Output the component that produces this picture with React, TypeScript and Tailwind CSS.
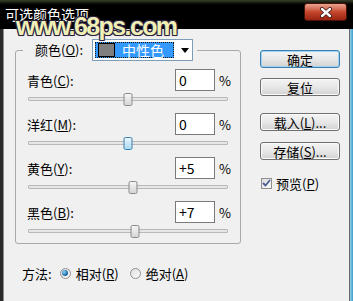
import React from "react";

const ROWS = [
  { label: "青色", key: "C", value: 0 },
  { label: "洋红", key: "M", value: 0, active: true },
  { label: "黄色", key: "Y", value: 5 },
  { label: "黑色", key: "B", value: 7 },
];

function Button({ children, primary }: { children: React.ReactNode; primary?: boolean }) {
  return (
    <div
      className={
        "flex h-[18px] w-[80px] items-center justify-center rounded-[3px] border bg-gradient-to-b from-[#f4f4f4] via-[#e8e8e8] to-[#d2d2d2] text-[13px] leading-none text-black " +
        (primary
          ? "border-[#3c7fb1] shadow-[inset_0_0_0_1px_#9fd3f2]"
          : "border-[#707070] shadow-[inset_0_0_0_1px_#fbfbfb]")
      }
    >
      {children}
    </div>
  );
}

function Slider({ value, active }: { value: number; active?: boolean }) {
  return (
    <div className="relative ml-[1px] flex h-[16px] w-[200px] items-center">
      <div className="h-[4px] w-full rounded-[1px] border border-[#b8b8b8] bg-[#e6e6e6]" />
      <div
        className={
          "absolute top-[2px] h-[13px] w-[9px] -translate-x-1/2 rounded-[2px] border " +
          (active
            ? "border-[#3c7fb1] bg-gradient-to-b from-[#eaf6fd] to-[#a7d9f5]"
            : "border-[#8a8a8a] bg-gradient-to-b from-[#f5f5f5] to-[#d6d6d6]")
        }
        style={{ left: 100 + value }}
      />
    </div>
  );
}

function Radio({ checked }: { checked?: boolean }) {
  return (
    <span className="flex h-[11px] w-[11px] items-center justify-center rounded-full border border-[#8e8f8f] bg-gradient-to-br from-[#e0e0e0] to-[#fafafa]">
      {checked && (
        <span className="h-[6px] w-[6px] rounded-full bg-[radial-gradient(circle_at_35%_35%,#8fd3ff,#1b6aa5_60%,#0d3f6b)]" />
      )}
    </span>
  );
}

export default function App() {
  return (
    <div className="flex h-[301px] w-[353px] flex-col overflow-hidden bg-black font-['Noto_Sans_CJK_SC','Liberation_Sans',sans-serif] text-[13px] text-black">
      {/* title bar */}
      <div className="relative z-10 h-[29px] shrink-0 bg-gradient-to-b from-[#39402c] via-black via-[22%] to-black">
        <div className="pl-[5px] pt-[6px] text-[14px] leading-[17px] text-white">可选颜色选项</div>
        <div className="absolute left-[16px] top-[14px] font-['Liberation_Sans',Arial,sans-serif] text-[25px] font-bold leading-[24px] tracking-[-1.6px] text-[#efefb6] [text-shadow:0_0_2px_#2b2342,1px_1px_0_#2b2342,-1px_-1px_0_#2b2342,1px_-1px_0_#2b2342,-1px_1px_0_#2b2342]">
          www.68ps.com
        </div>
        <div className="absolute right-[6px] top-[3px] flex h-[18px] w-[43px] items-center justify-center rounded-[3px] border border-[#4a1208] bg-gradient-to-b from-[#e9a592] via-[#c5452c] to-[#9b2410]">
          <svg width="14" height="11" viewBox="0 0 14 11">
            <path d="M3 2 L11 9 M11 2 L3 9" stroke="#3a1a14" strokeWidth="4" strokeLinecap="round" />
            <path d="M3 2 L11 9 M11 2 L3 9" stroke="#ffffff" strokeWidth="2.4" strokeLinecap="round" />
          </svg>
        </div>
      </div>

      {/* body */}
      <div className="flex flex-1">
        <div className="w-[3px] shrink-0 bg-[#2a2a2a]" />
        <div className="flex flex-1 border-l border-[#8c8c8c] bg-[#f0f0f0]">
          {/* left column */}
          <div className="ml-[11px] mt-[10px] flex w-[226px] flex-col">
            <fieldset className="rounded-[3px] border border-[#a9a9a9] pb-[4px]">
              <legend className="ml-[7px] flex items-center pl-[12px] pr-[4px]">
                <span className="w-[57px] leading-[16px]">
                  颜色(<u>O</u>):
                </span>
                <div className="flex h-[22px] w-[101px] items-center border border-[#7f9db9] bg-white pl-[2px]">
                  <div className="flex h-[16px] w-[79px] items-center border border-dotted border-[#1a1a1a] bg-[#3399ff] pl-[2px]">
                    <span className="h-[14px] w-[17px] border border-black bg-[#7f7f7f]" />
                    <span className="ml-[7px] text-[14px] leading-none text-white">中性色</span>
                  </div>
                  <svg className="ml-[7px]" width="8" height="5" viewBox="0 0 8 5">
                    <path d="M0 0 H8 L4 5 Z" fill="#000" />
                  </svg>
                </div>
              </legend>
              <div className="flex flex-col pl-[11px] pr-[9px] pt-[8px]">
                {ROWS.map((r, i) => (
                  <div key={r.key} className={i > 0 ? "mt-[6px]" : ""}>
                    <div className="flex h-[22px] items-center">
                      <span className="flex-1 leading-none">
                        {r.label}(<u>{r.key}</u>):
                      </span>
                      <div className="flex h-[22px] w-[40px] items-center border border-[#7a7a7a] bg-white pl-[3px] text-[14px] leading-none">
                        {r.value > 0 ? `+${r.value}` : r.value}
                      </div>
                      <span className="ml-[4px] w-[12px] leading-none">%</span>
                    </div>
                    <Slider value={r.value} active={r.active} />
                  </div>
                ))}
              </div>
            </fieldset>

            <div className="mt-[21px] flex h-[16px] items-center pl-[7px]">
              <span className="leading-none">方法:</span>
              <span className="ml-[8px]">
                <Radio checked />
              </span>
              <span className="ml-[5px] leading-none">
                相对(<u>R</u>)
              </span>
              <span className="ml-[11px]">
                <Radio />
              </span>
              <span className="ml-[5px] leading-none">
                绝对(<u>A</u>)
              </span>
            </div>
          </div>

          {/* right column */}
          <div className="ml-[19px] mt-[21px] flex flex-col">
            <Button primary>确定</Button>
            <div className="mt-[10px]">
              <Button>复位</Button>
            </div>
            <div className="mt-[17px]">
              <Button>
                载入(<u>L</u>)...
              </Button>
            </div>
            <div className="mt-[11px]">
              <Button>
                存储(<u>S</u>)...
              </Button>
            </div>
            <div className="ml-[1px] mt-[16px] flex h-[14px] items-center">
              <span className="flex h-[11px] w-[11px] items-center justify-center border border-[#8f8f8f] bg-gradient-to-br from-[#dcdcdc] to-[#fbfbfb]">
                <svg width="9" height="8" viewBox="0 0 9 8">
                  <path d="M1 4 L3.5 6.5 L8 1" fill="none" stroke="#4a5c94" strokeWidth="1.8" />
                </svg>
              </span>
              <span className="ml-[4px] leading-none">
                预览(<u>P</u>)
              </span>
            </div>
          </div>
          <div className="flex-1" />
        </div>
        <div className="w-[1px] shrink-0 bg-[#6b6b6b]" />
        <div className="w-[3px] shrink-0 bg-gradient-to-r from-[#8fd0ec] to-[#3c9cc9]" />
      </div>
    </div>
  );
}
